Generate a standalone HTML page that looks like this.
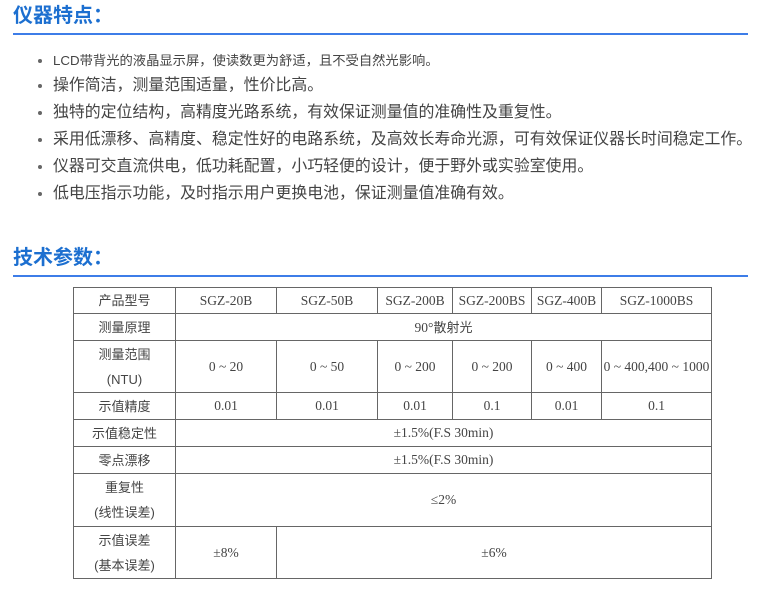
<!DOCTYPE html>
<html><head><meta charset="utf-8"><style>
body{margin:0;width:763px;height:592px;background:#fff;position:relative;overflow:hidden;font-family:"Liberation Sans","Noto Sans CJK SC",sans-serif;color:#444}
.h{position:absolute;left:13px;font-size:20px;font-weight:bold;color:#1c6fd0;line-height:24px}
.line{position:absolute;left:13px;width:735px;height:2px;background:#3d7de8}
ul{position:absolute;left:38px;top:49px;margin:0;padding:0;list-style:none}
li{position:relative;padding-left:15px;font-size:15.9px;line-height:27px;height:27px;white-space:nowrap;color:#444}
li:before{content:"";position:absolute;left:0;top:12px;width:4px;height:4px;border-radius:2px;background:#666}
li.s{font-size:13.3px;height:23px;line-height:23px}
li.s:before{top:10px}
table{position:absolute;left:73px;top:287px;border-collapse:collapse;table-layout:fixed;font-family:"Liberation Serif","Noto Sans CJK SC",serif;font-size:13.5px;color:#444}
td{border:1px solid #666;text-align:center;padding:0;white-space:nowrap;overflow:hidden;line-height:20px}
.c{font-family:"Liberation Sans","Noto Sans CJK SC",sans-serif;font-size:13px;line-height:25px}
</style></head><body>
<div class="h" style="top:4px">仪器特点：</div>
<div class="line" style="top:33px"></div>
<ul>
<li class="s">LCD带背光的液晶显示屏，使读数更为舒适，且不受自然光影响。</li>
<li>操作简洁，测量范围适量，性价比高。</li>
<li>独特的定位结构，高精度光路系统，有效保证测量值的准确性及重复性。</li>
<li>采用低漂移、高精度、稳定性好的电路系统，及高效长寿命光源，可有效保证仪器长时间稳定工作。</li>
<li>仪器可交直流供电，低功耗配置，小巧轻便的设计，便于野外或实验室使用。</li>
<li>低电压指示功能，及时指示用户更换电池，保证测量值准确有效。</li>
</ul>
<div class="h" style="top:246px">技术参数：</div>
<div class="line" style="top:275px"></div>
<table>
<colgroup><col style="width:102px"><col style="width:101px"><col style="width:101px"><col style="width:75px"><col style="width:79px"><col style="width:70px"><col style="width:110px"></colgroup>
<tr style="height:26px"><td class="c">产品型号</td><td>SGZ-20B</td><td>SGZ-50B</td><td>SGZ-200B</td><td>SGZ-200BS</td><td>SGZ-400B</td><td>SGZ-1000BS</td></tr>
<tr style="height:27px"><td class="c">测量原理</td><td colspan="6">90°<span class="c">散射光</span></td></tr>
<tr style="height:52px"><td class="c">测量范围<br>(NTU)</td><td>0 ~ 20</td><td>0 ~ 50</td><td>0 ~ 200</td><td>0 ~ 200</td><td>0 ~ 400</td><td>0 ~ 400,400 ~ 1000</td></tr>
<tr style="height:27px"><td class="c">示值精度</td><td>0.01</td><td>0.01</td><td>0.01</td><td>0.1</td><td>0.01</td><td>0.1</td></tr>
<tr style="height:27px"><td class="c">示值稳定性</td><td colspan="6">±1.5%(F.S 30min)</td></tr>
<tr style="height:27px"><td class="c">零点漂移</td><td colspan="6">±1.5%(F.S 30min)</td></tr>
<tr style="height:53px"><td class="c">重复性<br>(线性误差)</td><td colspan="6">≤2%</td></tr>
<tr style="height:52px"><td class="c">示值误差<br>(基本误差)</td><td>±8%</td><td colspan="5">±6%</td></tr>
</table>
</body></html>
